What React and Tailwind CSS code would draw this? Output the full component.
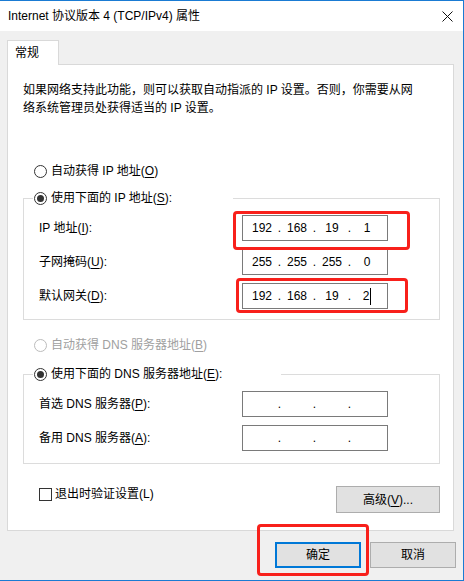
import React from "react";

const FONT = { fontFamily: '"Liberation Sans", "Noto Sans CJK SC", sans-serif' };

function U({ children }) {
  return <span className="underline underline-offset-[2px] decoration-1">{children}</span>;
}

function Radio({ checked, disabled }) {
  return (
    <span
      className={`flex h-[13px] w-[13px] shrink-0 items-center justify-center rounded-full border bg-white ${
        disabled ? "border-[#bcbcbc]" : "border-[#333333]"
      }`}
    >
      {checked && <span className="h-[7px] w-[7px] rounded-full bg-[#333333]" />}
    </span>
  );
}

function IpBox({ values, cursor }) {
  return (
    <div className="flex h-[26px] w-[146px] shrink-0 items-center border border-[#7a7a7a] bg-white pl-[5px] text-[12px] text-black">
      {[0, 1, 2, 3].map((i) => (
        <React.Fragment key={i}>
          <span className="flex w-[28px] items-center justify-center">
            {values ? values[i] : ""}
            {cursor && i === 3 && <span className="ml-[1px] inline-block h-[17px] w-px bg-black" />}
          </span>
          {i < 3 && <span className="w-[7px] text-center">.</span>}
        </React.Fragment>
      ))}
    </div>
  );
}

function Row({ label, children }) {
  return (
    <div className="flex items-center pl-[15px] pr-[51px]">
      <span className="flex-1 leading-[18px]">{label}</span>
      {children}
    </div>
  );
}

export default function App() {
  return (
    <div
      className="flex h-[581px] w-[464px] flex-col overflow-hidden border-r border-t border-b border-[#1a7bd3] text-[12px] text-black"
      style={FONT}
    >
      {/* Title bar */}
      <div className="flex h-[30px] shrink-0 items-center justify-between bg-white pl-[8px] pr-[9px]">
        <span className="leading-[18px]">Internet 协议版本 4 (TCP/IPv4) 属性</span>
        <svg width="11" height="11" viewBox="0 0 11 11" className="mr-[1px]">
          <path d="M0.5 0.5 L10.5 10.5 M10.5 0.5 L0.5 10.5" stroke="#111" strokeWidth="1" />
        </svg>
      </div>

      {/* Body */}
      <div className="flex flex-1 flex-col bg-[#f0f0f0] pl-[7px] pt-[9px]">
        {/* Tab */}
        <div className="relative z-10 -mb-px flex h-[25px] w-[52px] items-center border border-b-0 border-[#d9d9d9] bg-white pl-[7px] leading-[18px]">
          常规
        </div>

        {/* Panel */}
        <div className="flex w-[447px] flex-col border border-[#d9d9d9] bg-white pb-[17px] pt-[16px]">
          <p className="pl-[15px] leading-[18px]">
            如果网络支持此功能，则可以获取自动指派的 IP 设置。否则，你需要从网
            <br />
            络系统管理员处获得适当的 IP 设置。
          </p>

          <div className="mt-[45px] flex h-[18px] items-center gap-[4px] pl-[26px]">
            <Radio />
            <span>
              自动获得 IP 地址(<U>O</U>)
            </span>
          </div>

          <fieldset className="ml-[15px] mt-[9px] w-[417px] border border-[#dcdcdc] pb-[10px]">
            <legend className="ml-[9px] flex h-[18px] w-[200px] items-center gap-[4px] bg-white pl-[1px]">
              <Radio checked />
              <span>
                使用下面的 IP 地址(<U>S</U>):
              </span>
            </legend>
            <div className="mt-[8px] flex flex-col gap-[8px]">
              <Row
                label={
                  <>
                    IP 地址(<U>I</U>):
                  </>
                }
              >
                <div className="relative">
                  <IpBox values={["192", "168", "19", "1"]} />
                  <div className="pointer-events-none absolute -bottom-[9px] -left-[9px] -right-[22px] -top-[4px] rounded-[4px] border-[3px] border-[#f8201b]" />
                </div>
              </Row>
              <Row
                label={
                  <>
                    子网掩码(<U>U</U>):
                  </>
                }
              >
                <IpBox values={["255", "255", "255", "0"]} />
              </Row>
              <Row
                label={
                  <>
                    默认网关(<U>D</U>):
                  </>
                }
              >
                <div className="relative">
                  <IpBox values={["192", "168", "19", "2"]} cursor />
                  <div className="pointer-events-none absolute -bottom-[4px] -left-[6px] -right-[20px] -top-[5px] rounded-[4px] border-[3px] border-[#f8201b]" />
                </div>
              </Row>
            </div>
          </fieldset>

          <div className="mt-[16px] flex h-[18px] items-center gap-[4px] pl-[26px] text-[#a0a0a0]">
            <Radio disabled />
            <span>
              自动获得 DNS 服务器地址(<U>B</U>)
            </span>
          </div>

          <fieldset className="ml-[15px] mt-[11px] w-[417px] border border-[#dcdcdc] pb-[12px]">
            <legend className="ml-[9px] flex h-[18px] w-[248px] items-center gap-[4px] bg-white pl-[1px]">
              <Radio checked />
              <span>
                使用下面的 DNS 服务器地址(<U>E</U>):
              </span>
            </legend>
            <div className="mt-[8px] flex flex-col gap-[8px]">
              <Row
                label={
                  <>
                    首选 DNS 服务器(<U>P</U>):
                  </>
                }
              >
                <IpBox />
              </Row>
              <Row
                label={
                  <>
                    备用 DNS 服务器(<U>A</U>):
                  </>
                }
              >
                <IpBox />
              </Row>
            </div>
          </fieldset>

          <div className="mt-[21px] flex items-start justify-between pl-[31px] pr-[13px]">
            <div className="flex h-[18px] items-center gap-[3px]">
              <span className="h-[13px] w-[13px] border border-[#333333] bg-white" />
              <span>退出时验证设置(L)</span>
            </div>
            <button className="mt-[1px] flex h-[27px] w-[104px] items-center justify-center border border-[#adadad] bg-[#e1e1e1]">
              高级(<U>V</U>)...
            </button>
          </div>
        </div>

        {/* Bottom buttons */}
        <div className="mt-[11px] flex justify-end gap-[9px] pr-[7px]">
          <div className="relative">
            <button className="flex h-[26px] w-[86px] items-center justify-center border-2 border-[#0078d7] bg-[#e1e1e1]">
              确定
            </button>
            <div className="pointer-events-none absolute -bottom-[8px] -left-[18px] -right-[8px] -top-[18px] rounded-[4px] border-[3px] border-[#f8201b]" />
          </div>
          <button className="flex h-[26px] w-[86px] items-center justify-center border border-[#adadad] bg-[#e1e1e1]">
            取消
          </button>
        </div>
      </div>
    </div>
  );
}
